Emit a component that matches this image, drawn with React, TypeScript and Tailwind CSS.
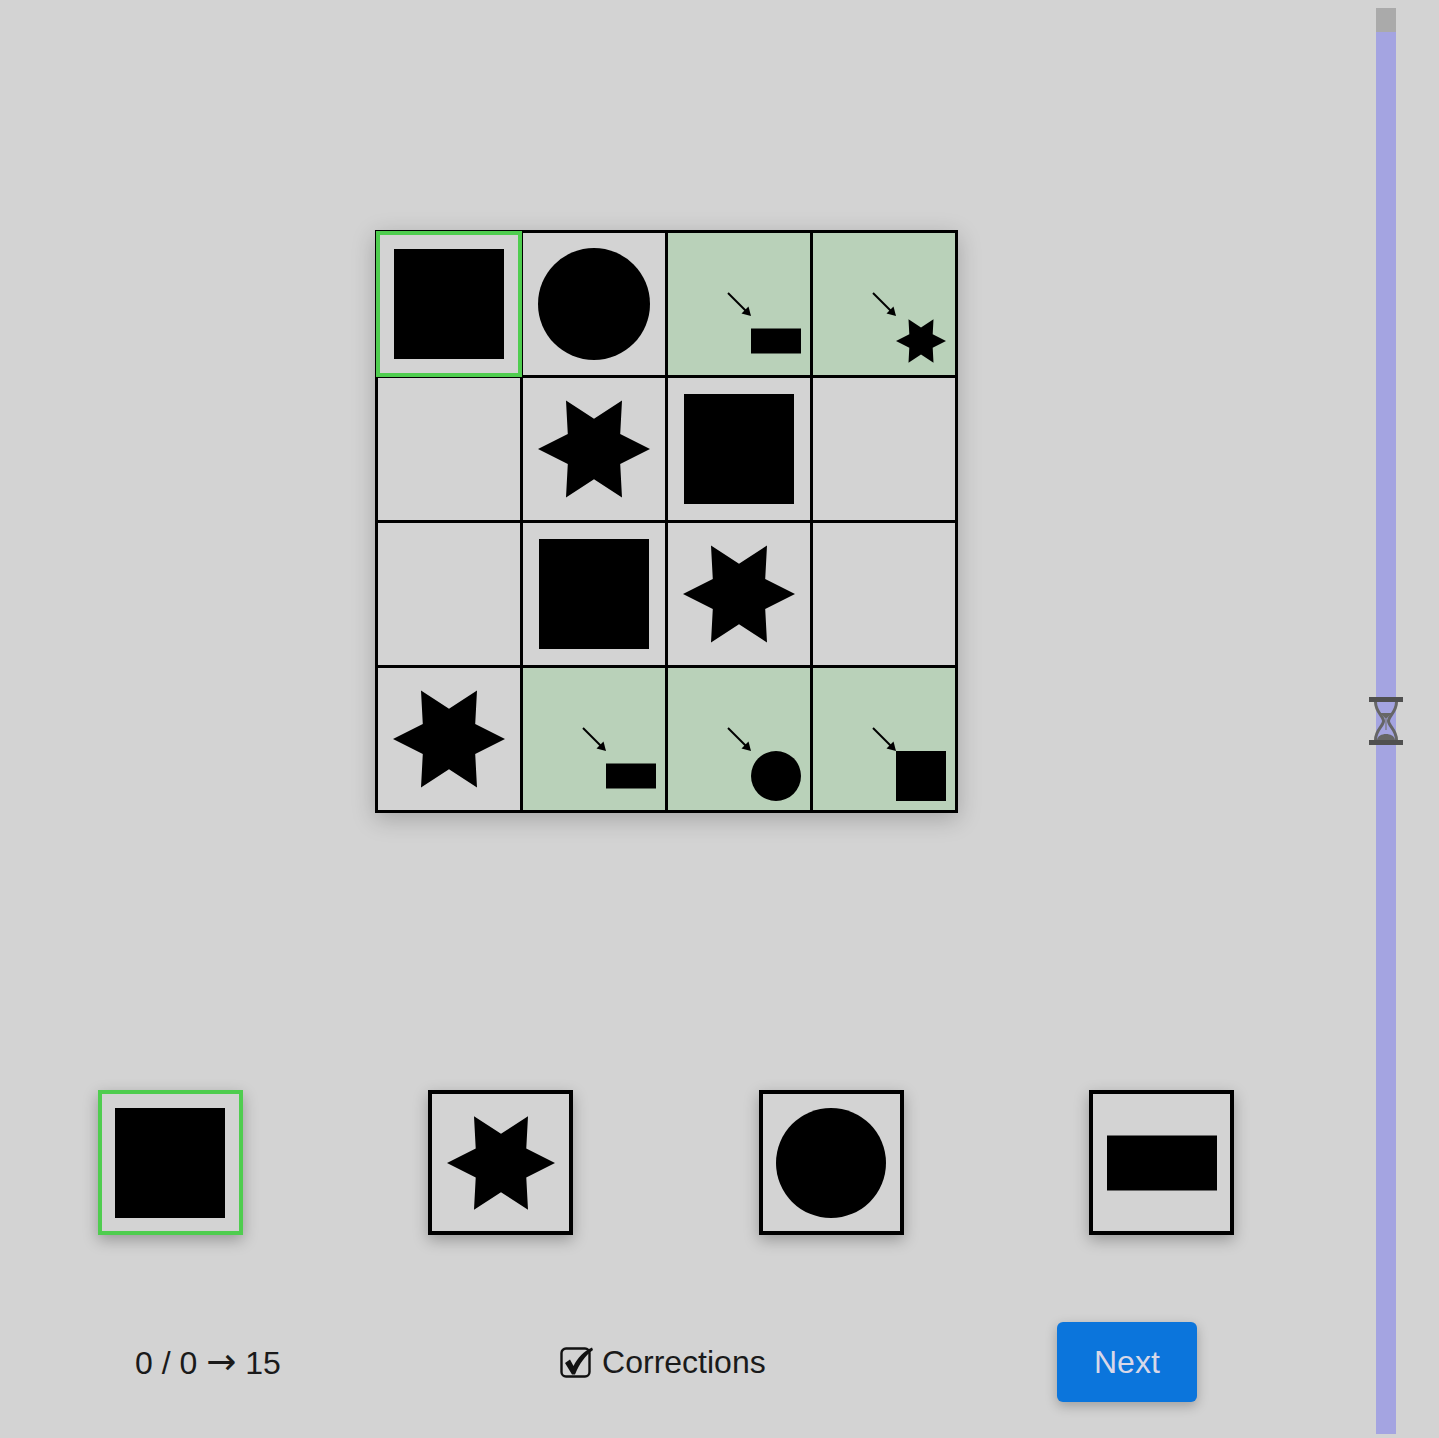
import React from 'react';

type Kind = 'square' | 'circle' | 'star' | 'rect';

interface CellData {
  kind?: Kind;
  hint?: boolean;
  selected?: boolean;
}

const board: CellData[][] = [
  [{ kind: 'square', selected: true }, { kind: 'circle' }, { kind: 'rect', hint: true }, { kind: 'star', hint: true }],
  [{}, { kind: 'star' }, { kind: 'square' }, {}],
  [{}, { kind: 'square' }, { kind: 'star' }, {}],
  [{ kind: 'star' }, { kind: 'rect', hint: true }, { kind: 'circle', hint: true }, { kind: 'square', hint: true }],
];

const choices: Kind[] = ['square', 'star', 'circle', 'rect'];

function Shape({ kind, size }: { kind: Kind; size: number }) {
  return (
    <svg width={size} height={size} viewBox="0 0 100 100" className="block">
      {kind === 'square' && <rect x="0" y="0" width="100" height="100" fill="#000" />}
      {kind === 'circle' && <circle cx="50" cy="50" r="50" fill="#000" />}
      {kind === 'rect' && <rect x="0" y="25" width="100" height="50" fill="#000" />}
      {kind === 'star' && (
        <polygon
          fill="#000"
          points="100,50 73.4,63.5 75,93.3 50,77 25,93.3 26.6,63.5 0,50 26.6,36.5 25,6.7 50,23 75,6.7 73.4,36.5"
        />
      )}
    </svg>
  );
}

function HintArrow() {
  return (
    <svg width="26" height="26" viewBox="0 0 26 26" className="absolute left-[-25px] top-[-25px]">
      <line x1="2" y1="2" x2="21" y2="21" stroke="#000" strokeWidth="2" />
      <polygon points="25,25 15.5,22.5 22.5,15.5" fill="#000" />
    </svg>
  );
}

function Cell({ cell }: { cell: CellData }) {
  if (cell.hint && cell.kind) {
    return (
      <div className="relative w-[142px] h-[142px] bg-[#b9d1b9] flex items-end justify-end p-[9px]">
        <div className="relative">
          <HintArrow />
          <Shape kind={cell.kind} size={50} />
        </div>
      </div>
    );
  }
  return (
    <div className="relative w-[142px] h-[142px] bg-[#d3d3d3] flex items-center justify-center">
      {cell.kind && <Shape kind={cell.kind} size={cell.kind === 'square' ? 110 : 112} />}
      {cell.selected && <div className="absolute -inset-[2px] border-[4px] border-[#4fcd4f]" />}
    </div>
  );
}

function Hourglass() {
  return (
    <svg width="34" height="48" viewBox="0 0 34 48" className="absolute left-1/2 top-[697px] -translate-x-1/2">
      <rect x="0" y="0" width="34" height="5" fill="#505050" />
      <rect x="0" y="43" width="34" height="5" fill="#505050" />
      <path
        d="M6.5 5 C6.5 15, 14.5 19, 14.5 24 C14.5 29, 6.5 33, 6.5 43 M27.5 5 C27.5 15, 19.5 19, 19.5 24 C19.5 29, 27.5 33, 27.5 43"
        stroke="#666"
        strokeWidth="3"
        fill="none"
      />
      <path d="M11 16 L23 16 L17 22 Z" fill="#666" />
      <line x1="17" y1="22" x2="17" y2="33" stroke="#777" strokeWidth="1.2" />
      <path d="M8 43 C9 35, 25 35, 26 43 Z" fill="#666" />
    </svg>
  );
}

function CheckIcon() {
  return (
    <svg width="34" height="32" viewBox="0 0 34 32" className="block">
      <rect x="1.5" y="2.5" width="28" height="28" rx="4.5" fill="none" stroke="#111" strokeWidth="2.4" />
      <path d="M5 17 L10 13.5 L13.5 20 C17.5 12, 24 5, 32 1.5 L33 4 C25.5 9.5, 19.5 17.5, 15 28.5 L12 28.5 Z" fill="#111" />
    </svg>
  );
}

export default function App() {
  return (
    <div className="flex w-[1439px] h-[1438px] bg-[#d3d3d3] font-['Liberation_Sans',Arial,sans-serif] text-[#1a1a1a] overflow-hidden">
      {/* Game area */}
      <div className="w-[1332px] flex flex-col items-center pt-[230px]">
        <div className="bg-black p-[3px] grid grid-cols-4 gap-[3px] shadow-[0_6px_22px_rgba(0,0,0,0.22)]">
          {board.map((row, r) => row.map((cell, c) => <Cell key={`${r}-${c}`} cell={cell} />))}
        </div>

        {/* Choices */}
        <div className="w-full flex justify-around px-[5px] mt-[277px]">
          {choices.map((k, i) => (
            <div
              key={k}
              className={`w-[145px] h-[145px] border-[4px] bg-[#d3d3d3] flex items-center justify-center shadow-[0_5px_14px_rgba(0,0,0,0.28)] ${i === 0 ? 'border-[#4fcd4f]' : 'border-black'}`}
            >
              <Shape kind={k} size={k === 'star' ? 108 : 110} />
            </div>
          ))}
        </div>

        {/* Footer */}
        <div className="w-[1345px] flex items-center justify-around mt-[87px]">
          <div className="text-[32px] leading-none">
            0 / 0 <span className="font-['DejaVu_Sans',sans-serif] text-[36px]">→</span> 15
          </div>
          <label className="flex items-center gap-[8px] text-[32px] leading-none -ml-[4px]">
            <CheckIcon />
            Corrections
          </label>
          <button className="ml-[8px] w-[140px] h-[80px] rounded-[6px] bg-[#0b75dc] text-[#d8d8e8] text-[32px] shadow-[0_4px_12px_rgba(0,0,0,0.25)]">
            Next
          </button>
        </div>
      </div>

      {/* Timer */}
      <div className="flex-1 relative flex justify-center pt-[8px] pb-[4px]">
        <div className="w-[20px] flex flex-col">
          <div className="h-[24px] bg-[#aaaaaa]" />
          <div className="flex-1 bg-[#a4a4e1]" />
        </div>
        <Hourglass />
      </div>
    </div>
  );
}
